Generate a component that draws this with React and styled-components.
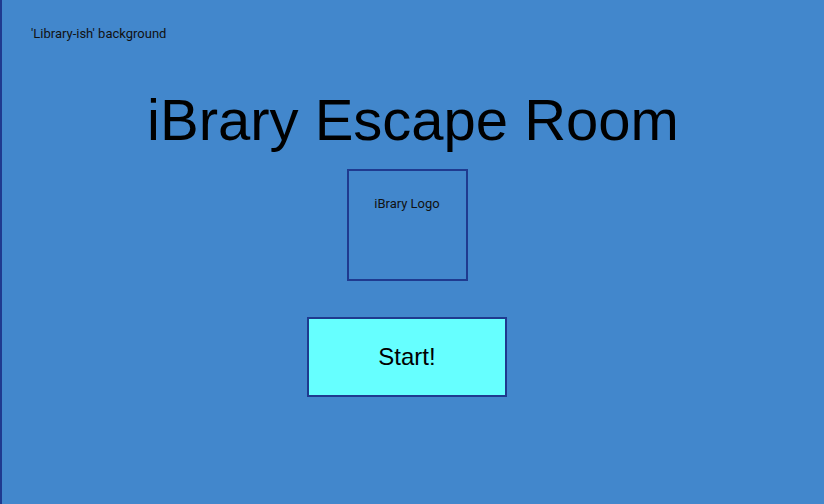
import React from "react";
import styled, { createGlobalStyle } from "styled-components";

const GlobalStyle = createGlobalStyle`
  html, body {
    margin: 0;
    padding: 0;
  }
  body {
    font-family: Roboto, "Liberation Sans", sans-serif;
  }
`;

const Page = styled.div`
  width: 824px;
  height: 504px;
  box-sizing: border-box;
  background-color: #4287cc;
  border-left: 2px solid #1f3a8f;
  display: flex;
  flex-direction: column;
  align-items: center;
  overflow: hidden;
`;

const BgNote = styled.div`
  align-self: flex-start;
  margin: 26px 0 0 29px;
  font-size: 13px;
  line-height: 15px;
  color: #111;
`;

const Title = styled.h1`
  margin: 50px 0 0;
  font-family: "Liberation Sans", Arial, sans-serif;
  font-weight: 400;
  font-size: 58px;
  line-height: 58px;
  color: #000;
`;

const LogoBox = styled.div`
  margin: 20px 12px 0 0;
  width: 121px;
  height: 112px;
  box-sizing: border-box;
  border: 2px solid #1f3a8f;
  display: flex;
  justify-content: center;
  padding-top: 25px;
  font-size: 13px;
  line-height: 15px;
  color: #111;
`;

const StartButton = styled.button`
  margin: 36px 12px 0 0;
  width: 200px;
  height: 80px;
  box-sizing: border-box;
  border: 2px solid #1f3a8f;
  border-radius: 0;
  background-color: #66ffff;
  font-family: "Liberation Sans", Arial, sans-serif;
  font-size: 24px;
  color: #000;
  cursor: pointer;
`;

export default function App() {
  return (
    <>
      <GlobalStyle />
      <Page>
        <BgNote>'Library-ish' background</BgNote>
        <Title>iBrary Escape Room</Title>
        <LogoBox>iBrary Logo</LogoBox>
        <StartButton>Start!</StartButton>
      </Page>
    </>
  );
}
